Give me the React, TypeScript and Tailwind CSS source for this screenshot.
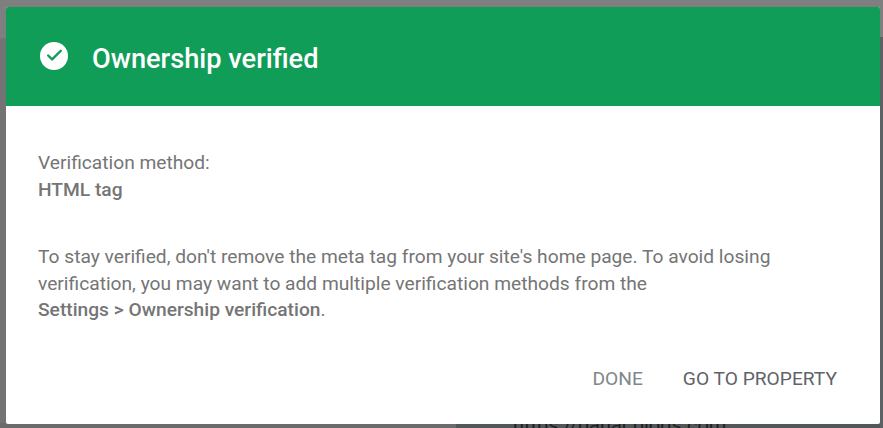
import { Check } from 'lucide-react';

const App = () => {
    return (
        <div className="relative h-[428px] w-[883px] overflow-hidden bg-[#7f7f7f] font-['Roboto',sans-serif]">
            {/* page behind the scrim */}
            <div className="absolute inset-x-0 top-[38px] h-px bg-[#767676]" />
            <div className="absolute inset-x-0 top-[386px] h-px bg-[#767676]" />
            <div className="absolute left-0 w-[6px] top-[39px] bottom-0 bg-[#737373]" />
            <div className="absolute left-0 bottom-0 h-[5px] w-[456px] bg-[#6b6b6b]" />
            <div className="absolute left-[456px] right-0 bottom-0 h-[5px] bg-[#52575a]" />
            <div className="absolute right-0 top-[37px] bottom-0 w-[3px] bg-[#5c6164]" />
            <p className="absolute left-[513px] top-[413px] text-[20px] leading-[24px] text-[#1f1f1f]">https://bahar.blogs.com</p>

            <div className="absolute left-[6px] top-[7px] flex h-[417px] w-[874px] flex-col overflow-hidden rounded-[2px] bg-white">
                <div className="flex h-[99px] items-center bg-[#0f9d58] pl-[34px] text-white">
                    <span className="mb-[2px] flex h-[28px] w-[28px] items-center justify-center rounded-full bg-white">
                        <Check className="h-[19px] w-[19px] text-[#0f9d58]" strokeWidth={3} />
                    </span>
                    <h1 className="ml-[24px] mt-[4px] text-[27.2px] font-medium leading-[32px]">Ownership verified</h1>
                </div>
                <div className="flex flex-1 flex-col px-[32px] pt-[44px] text-[19.2px] leading-[26.5px] text-[#757575]">
                    <p>Verification method:</p>
                    <p className="font-medium">HTML tag</p>
                    <p className="mt-[41px] w-[780px]">
                        To stay verified, don't remove the meta tag from your site's home page. To avoid losing verification, you may want to add multiple verification methods from the
                        <br />
                        <span className="font-medium">Settings &gt; Ownership verification</span>.
                    </p>
                    <div className="mt-[42px] flex justify-end gap-[40px] pr-[11px] leading-[26px]">
                        <button className="text-[#80868b]">DONE</button>
                        <button className="text-[#5f6368]">GO TO PROPERTY</button>
                    </div>
                </div>
            </div>
        </div>
    );
};

export default App;
